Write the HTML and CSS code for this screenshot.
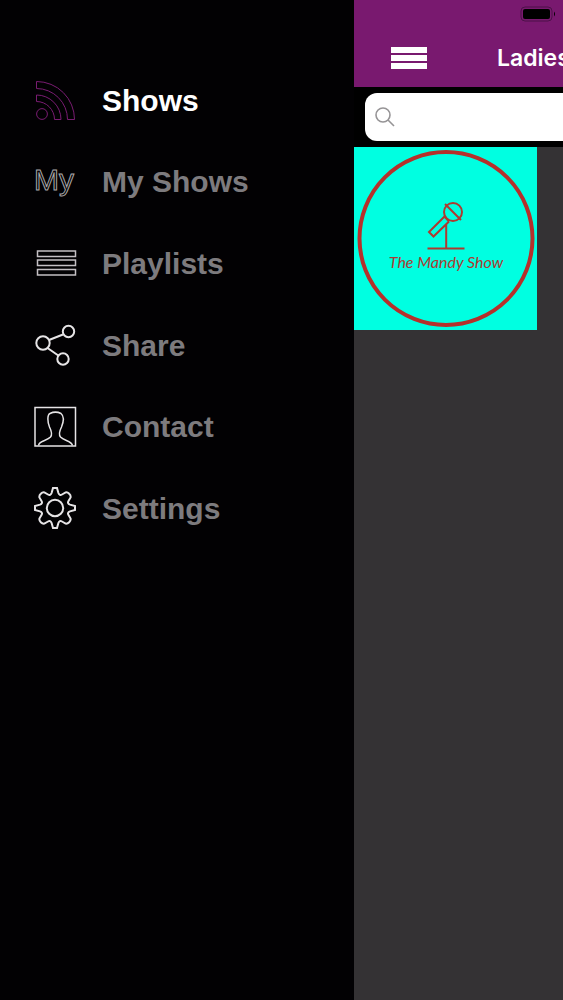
FILE: index.html
```html
<!DOCTYPE html>
<html lang="en">
<head>
<meta charset="utf-8">
<meta name="viewport" content="width=device-width, initial-scale=1">
<title>Shows</title>
<link rel="stylesheet" href="styles.css">
</head>
<body>
<div class="app">
  <nav class="drawer" aria-label="Main menu">
    <a class="item active" href="#shows">
      <svg class="icon rss" viewBox="0 0 44 44" aria-hidden="true">
        <circle cx="9" cy="35" r="5.400"/>
        <path d="M3.500 2.500A38 38 0 0 1 41.500 40.500H34.500A31 31 0 0 0 3.500 9.500Z"/>
        <path d="M3.500 16A24.500 24.500 0 0 1 28 40.500H21.500A18 18 0 0 0 3.500 22.500Z"/>
      </svg>
      <span>Shows</span>
    </a>
    <a class="item" href="#my-shows">
      <svg class="icon my" viewBox="0 0 44 44" aria-hidden="true"><text x="1" y="30">My</text></svg>
      <span>My Shows</span>
    </a>
    <a class="item" href="#playlists">
      <svg class="icon dim" viewBox="0 0 44 44" aria-hidden="true">
        <path d="M4.500 9h38v5.500h-38zM4.500 18h38v5.500h-38zM4.500 27.500h38v5.500h-38z"/>
      </svg>
      <span>Playlists</span>
    </a>
    <a class="item" href="#share">
      <svg class="icon bold" viewBox="0 0 44 44" aria-hidden="true">
        <circle cx="10" cy="19" r="6.700"/><circle cx="35.500" cy="7.500" r="5.700"/><circle cx="30" cy="35" r="5.700"/>
        <path d="M16 16 30 10.500M14.500 24l10.800 7.500"/>
      </svg>
      <span>Share</span>
    </a>
    <a class="item" href="#contact">
      <svg class="icon" viewBox="0 0 44 44" aria-hidden="true">
        <path d="M2 2.500H42.500V41H2Z"/>
        <path d="M5.500 40.500C6 35.500 14 36 17.500 32C20 29 18 25 16.500 22C14.500 17 14 10 17 8.500C21 6.500 25 7 28 8.500C31 11 30.500 17 28.500 22C27 25 25 29 27.500 32C31 36 38.500 35.500 39.500 40.500"/>
      </svg>
      <span>Contact</span>
    </a>
    <a class="item" href="#settings">
      <svg class="icon bold" viewBox="-22 -21 44 44" aria-hidden="true">
        <circle r="8.200"/>
        <path d="M-2-20H2L3.400-15Q4.500-12 7-13.500L10.600-15.600Q12.500-16 14.200-14.200Q16-12.500 15.600-10.600L13.500-7Q12-4.500 15-3.400L20-2V2L15 3.400Q12 4.500 13.500 7L15.600 10.600Q16 12.500 14.200 14.200Q12.500 16 10.600 15.600L7 13.500Q4.500 12 3.400 15L2 20H-2L-3.400 15Q-4.500 12-7 13.500L-10.600 15.600Q-12.500 16-14.200 14.200Q-16 12.500-15.600 10.600L-13.500 7Q-12 4.500-15 3.400L-20 2V-2L-15-3.400Q-12-4.500-13.500-7L-15.600-10.600Q-16-12.500-14.200-14.200Q-12.500-16-10.600-15.600L-7-13.500Q-4.500-12-3.400-15Z"/>
      </svg>
      <span>Settings</span>
    </a>
  </nav>

  <main class="panel">
    <header class="topbar">
      <div class="status">
        <svg class="battery" viewBox="0 0 36 16" role="img" aria-label="Battery full">
          <rect class="shell" x="1" y="1" width="31" height="14" rx="4"/>
          <rect x="3" y="3" width="27" height="10" rx="2"/>
          <path d="M34 5.500Q36 8 34 10.500Z"/>
        </svg>
      </div>
      <div class="heading">
        <button class="menu" type="button" aria-label="Menu">
          <svg viewBox="0 0 36 22" aria-hidden="true"><path d="M0 0h36v6H0zM0 8h36v6H0zM0 16h36v6H0z"/></svg>
        </button>
        <h1 class="title">Ladies</h1>
      </div>
    </header>
    <div class="searchbar">
      <label class="search">
        <svg viewBox="0 0 20 20" aria-hidden="true"><circle cx="8" cy="8" r="7"/><path d="m13 13 6 6"/></svg>
        <input type="search" aria-label="Search shows">
      </label>
    </div>
    <a class="cover" href="#the-mandy-show">
      <svg viewBox="0 0 183 183" aria-label="The Mandy Show">
        <circle class="ring" cx="92" cy="91.500" r="86.500"/>
        <g class="mic">
          <circle cx="99" cy="65" r="9"/>
          <path d="M91 57 107 73M90.500 69.500 75 85 79.500 89.500 95 74.500M90.500 69.500 95 74.500M92.200 77.500V101.500M73.500 101.500H110.500"/>
        </g>
        <text x="92" y="121">The Mandy Show</text>
      </svg>
    </a>
  </main>
</div>
</body>
</html>
```
FILE: styles.css
```css
* {
  box-sizing: border-box;
}

body {
  margin: 0;
  background: #020103;
  font-family: "Liberation Sans", Arial, sans-serif;
}

.app {
  display: flex;
  min-height: 100vh;
  overflow: hidden;
}

.drawer {
  flex: 0 0 354px;
  display: grid;
  grid-auto-rows: 1fr;
  align-self: flex-start;
  height: 490px;
  margin-top: 60px;
  padding-left: 33px;
}

.item {
  display: flex;
  align-items: center;
  gap: 25px;
  color: #7d7b7e;
  font-size: 30px;
  font-weight: bold;
  line-height: 36px;
  text-decoration: none;
}

.active {
  color: #fff;
}

.icon {
  width: 44px;
  height: 44px;
  fill: none;
  stroke: #e6e4e6;
  stroke-width: 1.5;
}

.bold {
  stroke-width: 2;
}

.dim {
  stroke: #c4c0c4;
}

.rss {
  stroke: #7a1c72;
  stroke-width: 1;
}

.my {
  stroke: #a9a7a9;
  stroke-width: 1;
  font-size: 30px;
  font-weight: normal;
}

.panel {
  flex: 1;
  min-width: 0;
  overflow: hidden;
  background: #343234;
}

.topbar {
  height: 87px;
  background: #79196f;
}

.status {
  display: flex;
  justify-content: flex-end;
  padding: 6px 7px 0 0;
}

.battery {
  width: 36px;
  height: 16px;
}

.shell {
  fill: none;
  stroke: #4c1148;
}

.heading {
  display: flex;
  align-items: center;
  gap: 70px;
  height: 72px;
  padding-left: 37px;
}

.menu {
  flex: none;
  padding: 0;
  border: 0;
  background: none;
}

.menu svg {
  display: block;
  width: 36px;
  height: 22px;
  fill: #fff;
}

.title {
  margin: 0;
  overflow: hidden;
  color: #fff;
  font: 600 23px/28px Inter, sans-serif;
  white-space: nowrap;
}

.searchbar {
  padding: 6px 0 6px 11px;
  background: #000;
}

.search {
  display: flex;
  align-items: center;
  gap: 10px;
  height: 48px;
  padding-left: 10px;
  border-radius: 12px 0 0 12px;
  background: #fff;
}

.search svg {
  flex: none;
  width: 20px;
  height: 20px;
  fill: none;
  stroke: #969496;
  stroke-width: 1.6;
}

.search input {
  flex: 1;
  min-width: 0;
  border: 0;
  outline: 0;
  background: none;
  font: 20px "Liberation Sans", Arial, sans-serif;
}

.cover {
  display: block;
  width: 183px;
  background: #00ffe1;
}

.cover svg {
  display: block;
  width: 100%;
}

.ring {
  fill: none;
  stroke: #b5302b;
  stroke-width: 4;
}

.mic {
  fill: none;
  stroke: #ad3a30;
  stroke-width: 2;
}

.cover text {
  fill: #ad3a30;
  font: italic 16px Lato, sans-serif;
  text-anchor: middle;
}
```
